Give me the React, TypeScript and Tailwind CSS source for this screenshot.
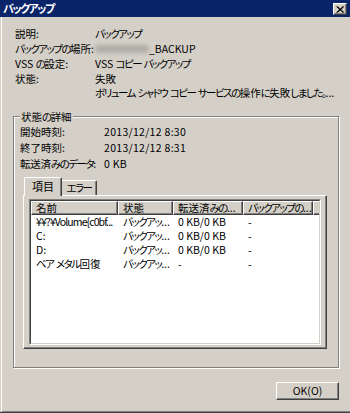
import React from "react";

function J({ t }: { t: string }) {
  const parts = t.split(/([\u3040-\u30ff\u3000-\u303f]+)/);
  return (
    <>
      {parts.map((p, i) =>
        /[\u3040-\u30ff\u3000-\u303f]/.test(p) ? (
          <span key={i} className="tracking-[-1.5px]">
            {p}
          </span>
        ) : (
          <React.Fragment key={i}>{p}</React.Fragment>
        )
      )}
    </>
  );
}

const headerCols = [
  { w: "w-[87px]", t: "名前" },
  { w: "w-[55px]", t: "状態" },
  { w: "w-[70px]", t: "転送済みの..." },
  { w: "w-[70px]", t: "バックアップの..." },
];

const rows = [
  ["¥¥?¥Volume{c0bf...", "バックアッ...", "0 KB/0 KB", "-"],
  ["C:", "バックアッ...", "0 KB/0 KB", "-"],
  ["D:", "バックアッ...", "0 KB/0 KB", "-"],
  ["ベア メタル回復", "バックアッ...", "-", "-"],
];

const colW = ["w-[87px]", "w-[55px]", "w-[70px]", "w-[70px]"];

export default function App() {
  return (
    <div className="w-[350px] h-[413px] bg-[#d4d0c8] flex flex-col overflow-hidden border-b border-[#404040] text-[10.5px] leading-[15px] text-black whitespace-nowrap font-['Noto_Sans_CJK_JP','Noto_Sans',sans-serif] [font-feature-settings:'palt']">
      {/* title bar */}
      <div className="h-[17px] shrink-0 bg-[#0a246a] flex items-start justify-between pl-[3px] pr-[3px]">
        <span className="text-white font-bold leading-[16px] text-[11px]">
          <J t="バックアップ" />
        </span>
        <div className="mt-[3px] w-[14px] h-[12px] bg-[#d4d0c8] border-t border-l border-white border-r border-b border-r-[#404040] border-b-[#404040] shadow-[inset_-1px_-1px_0_#808080] flex items-center justify-center">
          <svg width="8" height="7" viewBox="0 0 8 7">
            <path d="M0.5 0.5 L7 6.5 M1.5 0.5 L8 6.5 M7 0.5 L0.5 6.5 M8 0.5 L1.5 6.5" stroke="#000" strokeWidth="1" fill="none" />
          </svg>
        </div>
      </div>

      {/* body */}
      <div className="flex-1 flex flex-col ml-px border-l border-white border-b border-b-[#808080] pl-[11px] pr-[11px]">
        {/* info */}
        <div className="pt-[9px] pl-[2px] grid grid-cols-[80px_1fr]">
          <div className="h-[15px]"><J t="説明:" /></div>
          <div className="h-[15px]"><J t="バックアップ" /></div>
          <div className="h-[15px]"><J t="バックアップの場所:" /></div>
          <div className="h-[15px] flex items-center">
            <span className="inline-block w-[54px] h-[8px] bg-[#aeaca6] blur-[2px] rounded-sm" />
            <span className="leading-[15px]">_BACKUP</span>
          </div>
          <div className="h-[15px]"><J t="VSS の設定:" /></div>
          <div className="h-[15px]"><J t="VSS コピー バックアップ" /></div>
          <div className="h-[15px]"><J t="状態:" /></div>
          <div className="flex flex-col">
            <div className="h-[15px]"><J t="失敗" /></div>
            <div className="h-[13px] leading-[13px]">
              <J t="ボリューム シャドウ コピー サービスの操作に失敗しました。..." />
            </div>
          </div>
        </div>

        {/* group box */}
        <fieldset className="mt-[10px] w-[326px] h-[259px] border border-[#808080] shadow-[inset_1px_1px_0_#fff,1px_1px_0_#fff] p-0 m-0 flex flex-col">
          <legend className="ml-[6px] px-[1px] leading-[15px] bg-[#d4d0c8]">
            <J t="状態の詳細" />
          </legend>
          <div className="pl-[6px] grid grid-cols-[84px_1fr]">
            <div className="h-[16px] leading-[16px]"><J t="開始時刻:" /></div>
            <div className="h-[16px] leading-[16px] tracking-[0.3px]">2013/12/12 8:30</div>
            <div className="h-[16px] leading-[16px]"><J t="終了時刻:" /></div>
            <div className="h-[16px] leading-[16px] tracking-[0.3px]">2013/12/12 8:31</div>
            <div className="h-[16px] leading-[16px] tracking-[-0.2px]"><J t="転送済みのデータ:" /></div>
            <div className="h-[16px] leading-[16px] tracking-[0.3px]">0 KB</div>
          </div>

          {/* tabs */}
          <div className="mt-[6px] ml-[9px] w-[304px] flex flex-col">
            <div className="h-[17px] flex items-end pl-px">
              <div className="relative z-10 -mb-px w-[38px] h-[19px] bg-[#d4d0c8] border-t border-l border-white border-r border-r-[#404040] shadow-[inset_-1px_0_0_#808080] rounded-tl-[2px] rounded-tr-[2px] flex items-center justify-center text-[11px] pb-px">
                項目
              </div>
              <div className="w-[35px] h-[15px] bg-[#d4d0c8] border-t border-white border-r border-r-[#404040] shadow-[inset_-1px_0_0_#808080] rounded-tr-[2px] flex items-center justify-center leading-[14px]">
                <J t="エラー" />
              </div>
            </div>
            <div className="h-[154px] bg-[#d4d0c8] border-t border-l border-white border-r border-b border-r-[#404040] border-b-[#404040] shadow-[inset_-1px_-1px_0_#808080] pt-[3px] pl-[5px]">
              {/* list view */}
              <div className="w-[292px] h-[146px] border-t border-l border-[#808080] border-r border-b border-r-white border-b-white">
                <div className="w-full h-full border-t border-l border-[#404040] border-r border-b border-r-[#d4d0c8] border-b-[#d4d0c8] bg-white overflow-hidden">
                  <div className="flex h-[14px]">
                    {headerCols.map((c, i) => (
                      <div
                        key={i}
                        className={`${c.w} shrink-0 h-[14px] bg-[#d4d0c8] border-t border-l border-white border-r border-b border-r-[#404040] border-b-[#404040] shadow-[inset_-1px_-1px_0_#808080] pl-[4px] leading-[12px] overflow-hidden`}
                      >
                        <J t={c.t} />
                      </div>
                    ))}
                    <div className="flex-1 h-[14px] bg-[#d4d0c8] border-t border-l border-white border-b border-b-[#404040] shadow-[inset_0_-1px_0_#808080]" />
                  </div>
                  {rows.map((r, i) => (
                    <div key={i} className="flex h-[14px]">
                      {r.map((cell, j) => (
                        <div
                          key={j}
                          className={`${colW[j]} shrink-0 pl-[5px] leading-[14px] overflow-hidden ${i === 0 && j === 0 ? "tracking-[-0.9px]" : ""}`}
                        >
                          <J t={cell} />
                        </div>
                      ))}
                    </div>
                  ))}
                </div>
              </div>
            </div>
          </div>
        </fieldset>

        {/* button */}
        <div className="mt-[14px] flex justify-end">
          <div className="w-[63px] h-[18px] bg-[#d4d0c8] border-t border-l border-white border-r border-b border-r-[#404040] border-b-[#404040] shadow-[inset_-1px_-1px_0_#808080] flex items-center justify-center leading-[16px]">
            OK(O)
          </div>
        </div>
      </div>
    </div>
  );
}
